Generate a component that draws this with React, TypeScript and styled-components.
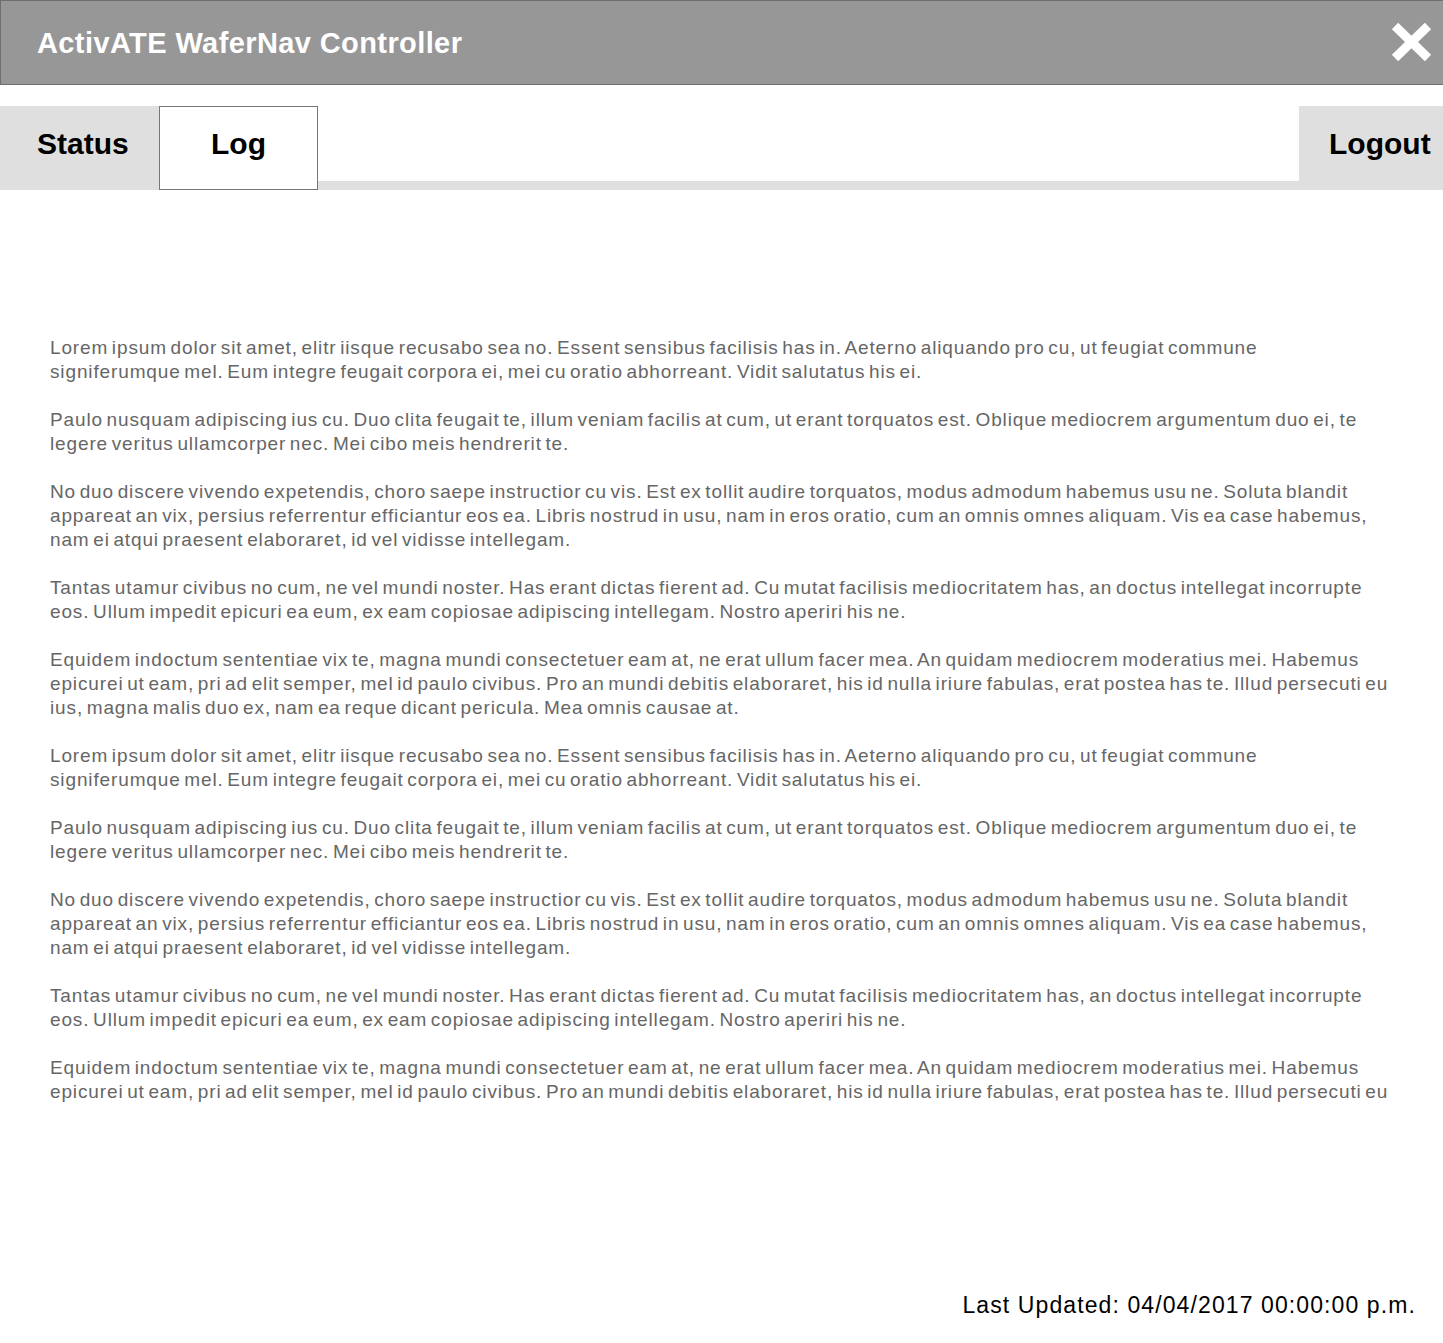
import styled, { createGlobalStyle } from "styled-components";

const GlobalStyle = createGlobalStyle`
  html, body {
    margin: 0;
    padding: 0;
    background: #ffffff;
  }
  body {
    font-family: "Liberation Sans", Arial, Helvetica, sans-serif;
  }
  * {
    box-sizing: border-box;
  }
`;

const paragraphs = [
  "Lorem ipsum dolor sit amet, elitr iisque recusabo sea no. Essent sensibus facilisis has in. Aeterno aliquando pro cu, ut feugiat commune signiferumque mel. Eum integre feugait corpora ei, mei cu oratio abhorreant. Vidit salutatus his ei.",
  "Paulo nusquam adipiscing ius cu. Duo clita feugait te, illum veniam facilis at cum, ut erant torquatos est. Oblique mediocrem argumentum duo ei, te legere veritus ullamcorper nec. Mei cibo meis hendrerit te.",
  "No duo discere vivendo expetendis, choro saepe instructior cu vis. Est ex tollit audire torquatos, modus admodum habemus usu ne. Soluta blandit appareat an vix, persius referrentur efficiantur eos ea. Libris nostrud in usu, nam in eros oratio, cum an omnis omnes aliquam. Vis ea case habemus, nam ei atqui praesent elaboraret, id vel vidisse intellegam.",
  "Tantas utamur civibus no cum, ne vel mundi noster. Has erant dictas fierent ad. Cu mutat facilisis mediocritatem has, an doctus intellegat incorrupte eos. Ullum impedit epicuri ea eum, ex eam copiosae adipiscing intellegam. Nostro aperiri his ne.",
  "Equidem indoctum sententiae vix te, magna mundi consectetuer eam at, ne erat ullum facer mea. An quidam mediocrem moderatius mei. Habemus epicurei ut eam, pri ad elit semper, mel id paulo civibus. Pro an mundi debitis elaboraret, his id nulla iriure fabulas, erat postea has te. Illud persecuti eu ius, magna malis duo ex, nam ea reque dicant pericula. Mea omnis causae at.",
];

const logEntries = [...paragraphs, ...paragraphs];

export default function App() {
  return (
    <>
      <GlobalStyle />
      <Page>
        <Header>
          <Title>ActivATE WaferNav Controller</Title>
          <CloseButton aria-label="Close">
            <svg width="48" height="46" viewBox="0 0 48 46">
              <line x1="7" y1="6" x2="40" y2="38" stroke="#ffffff" strokeWidth="9" />
              <line x1="40" y1="6" x2="7" y2="38" stroke="#ffffff" strokeWidth="9" />
            </svg>
          </CloseButton>
        </Header>

        <TabBar>
          <Tab $width={159} $padLeft={37}>Status</Tab>
          <Tab $width={159} $active $center>
            Log
          </Tab>
          <TabFiller />
          <Tab $width={144} $padLeft={30}>Logout</Tab>
        </TabBar>

        <Main>
          <LogBox>
            {logEntries.map((text, i) => (
              <Entry key={i}>{text}</Entry>
            ))}
          </LogBox>
        </Main>

        <Footer>
          <Updated>Last Updated: 04/04/2017 00:00:00 p.m.</Updated>
        </Footer>
      </Page>
    </>
  );
}

const Page = styled.div`
  display: flex;
  flex-direction: column;
  width: 100%;
  height: 100vh;
  overflow: hidden;
`;

const Header = styled.header`
  display: flex;
  align-items: center;
  justify-content: space-between;
  height: 85px;
  padding: 2px 7px 0 36px;
  background: #979797;
  border-top: 1px solid #6f6f6f;
  border-left: 1px solid #6f6f6f;
  border-bottom: 1px solid #6f6f6f;
  flex-shrink: 0;
`;

const Title = styled.h1`
  margin: 0;
  color: #ffffff;
  font-size: 29px;
  font-weight: bold;
  letter-spacing: 0.4px;
`;

const CloseButton = styled.button`
  display: flex;
  padding: 0;
  margin-top: -2px;
  border: none;
  background: transparent;
  cursor: pointer;
`;

const TabBar = styled.nav`
  display: flex;
  align-items: stretch;
  height: 84px;
  margin-top: 21px;
  flex-shrink: 0;
`;

const Tab = styled.div<{
  $width: number;
  $padLeft?: number;
  $active?: boolean;
  $center?: boolean;
}>`
  display: flex;
  align-items: center;
  justify-content: ${(p) => (p.$center ? "center" : "flex-start")};
  width: ${(p) => p.$width}px;
  padding-left: ${(p) => p.$padLeft ?? 0}px;
  padding-bottom: 8px;
  background: ${(p) => (p.$active ? "#ffffff" : "#dfdfdf")};
  border: ${(p) => (p.$active ? "1px solid #777777" : "none")};
  color: #000000;
  font-size: 30px;
  font-weight: bold;
  flex-shrink: 0;
  cursor: pointer;
`;

const TabFiller = styled.div`
  flex: 1;
  align-self: flex-end;
  height: 9px;
  background: #dfdfdf;
`;

const Main = styled.main`
  padding: 146px 52px 0 50px;
  flex-shrink: 0;
`;

const LogBox = styled.div`
  height: 768px;
  overflow: hidden;
`;

const Entry = styled.p`
  margin: 0 0 24px 0;
  color: #666666;
  font-size: 19px;
  line-height: 24px;
  letter-spacing: 0.87px;
  word-spacing: -2.5px;
`;

const Footer = styled.footer`
  display: flex;
  justify-content: flex-end;
  flex: 1;
  align-items: flex-end;
  padding: 0 27px 25px 0;
`;

const Updated = styled.div`
  color: #000000;
  font-size: 23px;
  line-height: 26px;
  letter-spacing: 1.1px;
`;
